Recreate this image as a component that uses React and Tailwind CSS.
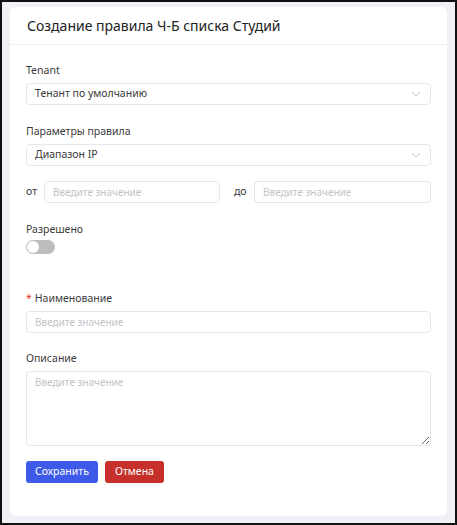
import { useState } from 'react';

function Chevron() {
  return (
    <svg className="w-3 h-3 text-[#c4c4c4]" viewBox="0 0 12 12" fill="none" stroke="currentColor" strokeWidth="1">
      <path d="M2 4l4 4 4-4" />
    </svg>
  );
}

function Field({ label, required, children }) {
  return (
    <div className="flex flex-col gap-[6px]">
      <div className="text-[10.5px] text-[#3a3a3a] leading-[14px]">
        {required && <span className="text-[#e3342f] mr-[3px]">*</span>}
        {label}
      </div>
      {children}
    </div>
  );
}

function Select({ value }) {
  return (
    <div className="h-[22px] border border-[#e6e6ea] rounded-[4px] flex items-center justify-between px-[8px] text-[10.5px] text-[#3a3a3a]">
      <span>{value}</span>
      <Chevron />
    </div>
  );
}

export default function App() {
  const [allowed, setAllowed] = useState(false);

  return (
    <div className="w-[457px] h-[525px] border-2 border-[#111] bg-[#f0f0f6] px-[8px] pt-[5px] pb-[7px] font-['Noto_Sans',sans-serif]">
      <div className="h-full bg-white rounded-[6px] flex flex-col">
        <div className="h-[38px] border-b border-[#f0f0f3] flex items-center px-[17px] text-[14px] text-[#222]">
          Создание правила Ч-Б списка Студий
        </div>
        <div className="px-[16px] pt-[18px] flex flex-col">
          <Field label="Tenant">
            <Select value="Тенант по умолчанию" />
          </Field>
          <div className="mt-[19px]">
            <Field label="Параметры правила">
              <Select value="Диапазон IP" />
            </Field>
          </div>
          <div className="mt-[15px] flex items-center text-[10.5px] text-[#3a3a3a]">
            <span className="w-[18px]">от</span>
            <input
              className="w-[176px] h-[22px] border border-[#e6e6ea] rounded-[4px] px-[8px] text-[10px] placeholder-[#c4c4c8] outline-none"
              placeholder="Введите значение"
            />
            <span className="ml-[14px] w-[20px]">до</span>
            <input
              className="flex-1 h-[22px] border border-[#e6e6ea] rounded-[4px] px-[8px] text-[10px] placeholder-[#c4c4c8] outline-none"
              placeholder="Введите значение"
            />
          </div>
          <div className="mt-[19px] flex flex-col gap-[4px]">
            <div className="text-[10.5px] text-[#3a3a3a] leading-[14px]">Разрешено</div>
            <button
              onClick={() => setAllowed(!allowed)}
              className={`w-[29px] h-[14px] rounded-full p-[1px] flex ${allowed ? 'bg-[#3b5bdb] justify-end' : 'bg-[#bdbdbd] justify-start'}`}
            >
              <span className="w-[12px] h-[12px] rounded-full bg-white" />
            </button>
          </div>
          <div className="mt-[37px]">
            <Field label="Наименование" required>
              <input
                className="w-full h-[22px] border border-[#e6e6ea] rounded-[4px] px-[8px] text-[10px] placeholder-[#c4c4c8] outline-none"
                placeholder="Введите значение"
              />
            </Field>
          </div>
          <div className="mt-[18px]">
            <Field label="Описание">
              <textarea
                className="w-full h-[75px] border border-[#e6e6ea] rounded-[4px] px-[8px] py-[3px] text-[10px] placeholder-[#c4c4c8] outline-none"
                placeholder="Введите значение"
              />
            </Field>
          </div>
          <div className="mt-[15px] flex gap-[7px]">
            <button className="h-[22px] px-[9px] rounded-[3px] bg-[#3d5ae8] text-white text-[10.5px]">Сохранить</button>
            <button className="h-[22px] px-[10px] rounded-[3px] bg-[#c5302b] text-white text-[10.5px]">Отмена</button>
          </div>
        </div>
      </div>
    </div>
  );
}
